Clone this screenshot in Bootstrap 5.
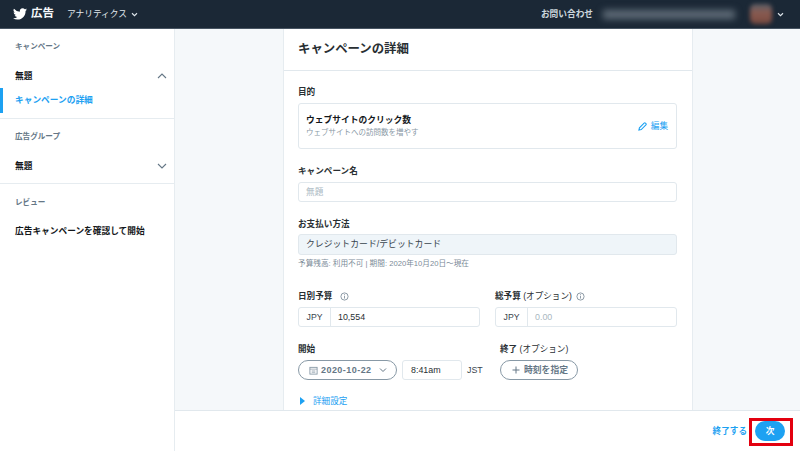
<!DOCTYPE html>
<html lang="ja"><head><meta charset="utf-8">
<link href="https://cdn.jsdelivr.net/npm/bootstrap@5.3.0/dist/css/bootstrap.min.css" rel="stylesheet">
<style>
html,body{height:451px;overflow:hidden}
body{font-family:"Liberation Sans","Noto Sans CJK JP",sans-serif;font-size:8.7px;color:#14171a;line-height:1.2;background:#fff}
.topbar{height:29px;background:#1b2836;border-bottom:1px solid #475462;color:#e1e8ed;padding:0 0 0 13px}
.brand-word{font-size:11.5px;font-weight:700;color:#f5f8fa;margin-left:4px;margin-right:13px}
.top-menu{font-size:8.7px}
.top-help{font-size:8.7px;font-weight:700;margin-right:10px;color:#ccd6dd}
.blurred-name{width:132px;height:9px;background:#5f6b77;filter:blur(3.5px);margin-right:15px}
.blurred-face{width:22px;height:20px;background:linear-gradient(#5d6068,#8a5a50 45%,#76493f);filter:blur(2px);border-radius:5px;margin-right:5px}
.shell{height:422px}
.side{width:175px;flex:none;border-right:1px solid #e6ecf0;background:#fff}
.side-head{font-size:7.6px;color:#657786;font-weight:700;padding-left:15px;height:12px}
.side-item{font-size:8.7px;font-weight:700;padding:0 6px 0 15px;height:14px}
.side-active{color:#1da1f2;border-left:3px solid #1da1f2;padding-left:12px;height:25px;margin-top:5px}
.side-rule{border-top:1px solid #e6ecf0}
.head-first{margin-top:13px}
.head-mid{margin-top:13px}
.head-last{margin-top:14px}
.item-gap{margin-top:15px}
.item-last{margin-top:14px;line-height:14px}
.rule-a{margin-top:5px}
.rule-b{margin-top:10px}
.main-col{min-width:0;background:#f5f8fa}
.scroller{height:381px;overflow:hidden}
.sheet{width:410px;margin-left:108px;background:#fff;border-left:1px solid #e6ecf0;border-right:1px solid #e6ecf0;height:381px}
.sheet-title{height:42px;padding:0 14px;border-bottom:1px solid #e1e8ed;font-size:12.4px;font-weight:700;color:#292f33}
.sheet-body{padding:15px 15px 0 14px}
.fld{font-size:8.6px;font-weight:700;color:#292f33;height:12px;line-height:12px;white-space:nowrap}
.fld span{font-weight:400}
.fld-next{margin-top:15px}
.fld.fld-next,.start-row .fld{line-height:14px}
.fld-budget{margin-top:21px}
.goal{height:46px;border:1px solid #e1e8ed;border-radius:3px;padding:0 8px 0 7px;margin-top:5px}
.goal-name{font-size:8.75px;font-weight:700;margin-bottom:3px}
.goal-sub{font-size:7.5px;color:#8a99a6}
.edit-link{font-size:8.6px;color:#1da1f2;font-weight:400}
.fake-input{height:20px;border:1px solid #e1e8ed;border-radius:3px;background:#fff;padding:0 7px;font-size:8.7px;color:#292f33;margin-top:6px}
.muted-val{color:#aab8c2}
.locked{background:#eff5f9;color:#38444d;font-size:8.85px;height:21px;margin-top:5px}
.hint{font-size:7.65px;color:#7c8b98;margin-top:4px;height:10px;line-height:10px}
.cur{width:32px;flex:none;border-right:1px solid #e1e8ed;font-size:8.7px;height:100%;color:#38444d}
.amt{font-size:8.9px;padding-left:7px}
.tight-top{margin-top:5px}
.pair{gap:15px}
.pair>div{width:182px;flex:none}
.start-col{width:202px;flex:none}
.pill{height:20px;border:1px solid #8899a6;border-radius:10px;background:#fff;color:#657786;font-weight:700;white-space:nowrap;margin-top:6px;flex:none}
.pill-date{width:99px;padding:0 0 0 10px;font-size:9px;letter-spacing:.45px;gap:3px}
.pill-add{width:78px;padding:0 0 0 11px;font-size:8.8px;gap:4px}
.pill svg{flex:none}
.chev-gap{margin-left:4px}
.clock{width:60px;margin-left:5px;font-size:8.9px;padding-left:8px}
.tz{font-size:8.8px;color:#38444d;margin-left:5px;margin-top:6px}
.adv{color:#1da1f2;font-size:8.6px;margin-left:2px;margin-top:16px}
.foot{height:41px;background:#fff;border-top:1px solid #e1e8ed;padding-right:15px;position:relative}
.quit{font-size:8.6px;color:#1da1f2;font-weight:700;margin-right:8px}
.next-btn{width:30px;height:20px;border-radius:10px;background:#1da1f2;color:#fff;font-size:8.7px;font-weight:700;border:0;padding:0}
.red-mark{position:absolute;left:574px;top:7px;width:44px;height:28px;border:3px solid #e3000f;pointer-events:none}
</style></head><body>
<header class="topbar d-flex align-items-center">
<svg width="14" height="12" viewBox="0 0 24 20"><path fill="#fff" d="M24 2.400a9.600 9.600 0 0 1-2.800.8A5 5 0 0 0 23.300.5a9.800 9.800 0 0 1-3.100 1.200A4.900 4.900 0 0 0 11.800 6.100 14 14 0 0 1 1.700.9a4.900 4.900 0 0 0 1.500 6.600 4.900 4.900 0 0 1-2.200-.6v.1a4.900 4.900 0 0 0 3.900 4.800 5 5 0 0 1-2.200.1 4.900 4.900 0 0 0 4.600 3.400A9.900 9.900 0 0 1 0 17.400 13.900 13.900 0 0 0 7.500 19.600c9.100 0 14-7.500 14-14v-.6A10 10 0 0 0 24 2.400z"/></svg>
<span class="brand-word">広告</span>
<span class="top-menu">アナリティクス</span>
<svg class="ms-1" width="7" height="5" viewBox="0 0 8 6"><path d="M1 1.500l3 3 3-3" fill="none" stroke="#e1e8ed" stroke-width="1.300"/></svg>
<div class="ms-auto d-flex align-items-center">
<span class="top-help">お問い合わせ</span>
<div class="blurred-name"></div>
<div class="blurred-face"></div>
<svg class="me-3" width="7" height="5" viewBox="0 0 8 6"><path d="M1 1.500l3 3 3-3" fill="none" stroke="#e1e8ed" stroke-width="1.300"/></svg>
</div>
</header>
<div class="shell d-flex">
<aside class="side">
<div class="side-head head-first">キャンペーン</div>
<div class="side-item item-gap d-flex align-items-center justify-content-between"><span>無題</span>
<svg width="12" height="8" viewBox="0 0 12 8"><path d="M2 6l4-4 4 4" fill="none" stroke="#657786" stroke-width="1.100"/></svg></div>
<div class="side-item side-active d-flex align-items-center">キャンペーンの詳細</div>
<div class="side-rule rule-a"></div>
<div class="side-head head-mid">広告グループ</div>
<div class="side-item item-gap d-flex align-items-center justify-content-between"><span>無題</span>
<svg width="12" height="8" viewBox="0 0 12 8"><path d="M2 2l4 4 4-4" fill="none" stroke="#657786" stroke-width="1.100"/></svg></div>
<div class="side-rule rule-b"></div>
<div class="side-head head-last">レビュー</div>
<div class="side-item item-last">広告キャンペーンを確認して開始</div>
</aside>
<main class="main-col flex-grow-1">
<div class="scroller">
<section class="sheet">
<div class="sheet-title d-flex align-items-center">キャンペーンの詳細</div>
<div class="sheet-body">
<div class="fld">目的</div>
<div class="goal d-flex align-items-center justify-content-between">
<div><div class="goal-name">ウェブサイトのクリック数</div><div class="goal-sub">ウェブサイトへの訪問数を増やす</div></div>
<div class="edit-link d-flex align-items-center gap-1"><svg width="9" height="9" viewBox="0 0 10 10"><path d="M1 9l.6-2.600L6.800 1.200a1 1 0 0 1 1.400 0l.6.6a1 1 0 0 1 0 1.400L3.600 8.400z" fill="none" stroke="#1da1f2" stroke-width="1.200"/></svg>編集</div>
</div>
<div class="fld fld-next">キャンペーン名</div>
<div class="fake-input d-flex align-items-center muted-val">無題</div>
<div class="fld fld-next">お支払い方法</div>
<div class="fake-input locked d-flex align-items-center">クレジットカード/デビットカード</div>
<div class="hint">予算残高: 利用不可 | 期間: 2020年10月20日〜現在</div>
<div class="d-flex pair fld-budget">
<div><div class="fld d-flex align-items-center gap-2">日別予算<svg width="9" height="9" viewBox="0 0 10 10"><circle cx="5" cy="5" r="4" fill="none" stroke="#657786" stroke-width=".8"/><path d="M5 4.300v3M5 2.500v1" stroke="#657786" stroke-width=".8"/></svg></div>
<div class="fake-input tight-top d-flex align-items-center p-0"><div class="cur d-flex align-items-center justify-content-center">JPY</div><div class="amt">10,554</div></div></div>
<div><div class="fld d-flex align-items-center">総予算&nbsp;<span>(オプション)</span><svg class="ms-1" width="9" height="9" viewBox="0 0 10 10"><circle cx="5" cy="5" r="4" fill="none" stroke="#657786" stroke-width=".8"/><path d="M5 4.300v3M5 2.500v1" stroke="#657786" stroke-width=".8"/></svg></div>
<div class="fake-input tight-top d-flex align-items-center p-0"><div class="cur d-flex align-items-center justify-content-center">JPY</div><div class="amt muted-val">0.00</div></div></div>
</div>
<div class="d-flex fld-next start-row">
<div class="start-col"><div class="fld">開始</div>
<div class="d-flex align-items-center">
<div class="pill pill-date d-flex align-items-center"><svg width="9" height="9" viewBox="0 0 10 10"><rect x="1" y="1.500" width="8" height="7.500" fill="none" stroke="#8899a6"/><path d="M1 3.500h8M3 5.500h4M3 7h4" stroke="#8899a6" stroke-width=".8"/></svg>2020-10-22<svg class="chev-gap" width="8" height="6" viewBox="0 0 8 6"><path d="M1 1.500l3 3 3-3" fill="none" stroke="#657786"/></svg></div>
<div class="fake-input clock d-flex align-items-center">8:41am</div>
<span class="tz">JST</span>
</div></div>
<div><div class="fld">終了 <span>(オプション)</span></div>
<div class="pill pill-add d-flex align-items-center"><svg width="8" height="8" viewBox="0 0 8 8"><path d="M4 .5v7M.5 4h7" stroke="#657786"/></svg>時刻を指定</div></div>
</div>
<div class="adv d-flex align-items-center gap-2"><svg width="5" height="8" viewBox="0 0 5 8"><path d="M0 0l5 4-5 4z" fill="#1da1f2"/></svg>詳細設定</div>
</div>
</section>
</div>
<footer class="foot d-flex align-items-center justify-content-end">
<span class="quit">終了する</span>
<button class="next-btn" type="button">次</button>
<div class="red-mark"></div>
</footer>
</main>
</div>
<script src="https://cdn.jsdelivr.net/npm/bootstrap@5.3.0/dist/js/bootstrap.bundle.min.js"></script>
</body></html>
